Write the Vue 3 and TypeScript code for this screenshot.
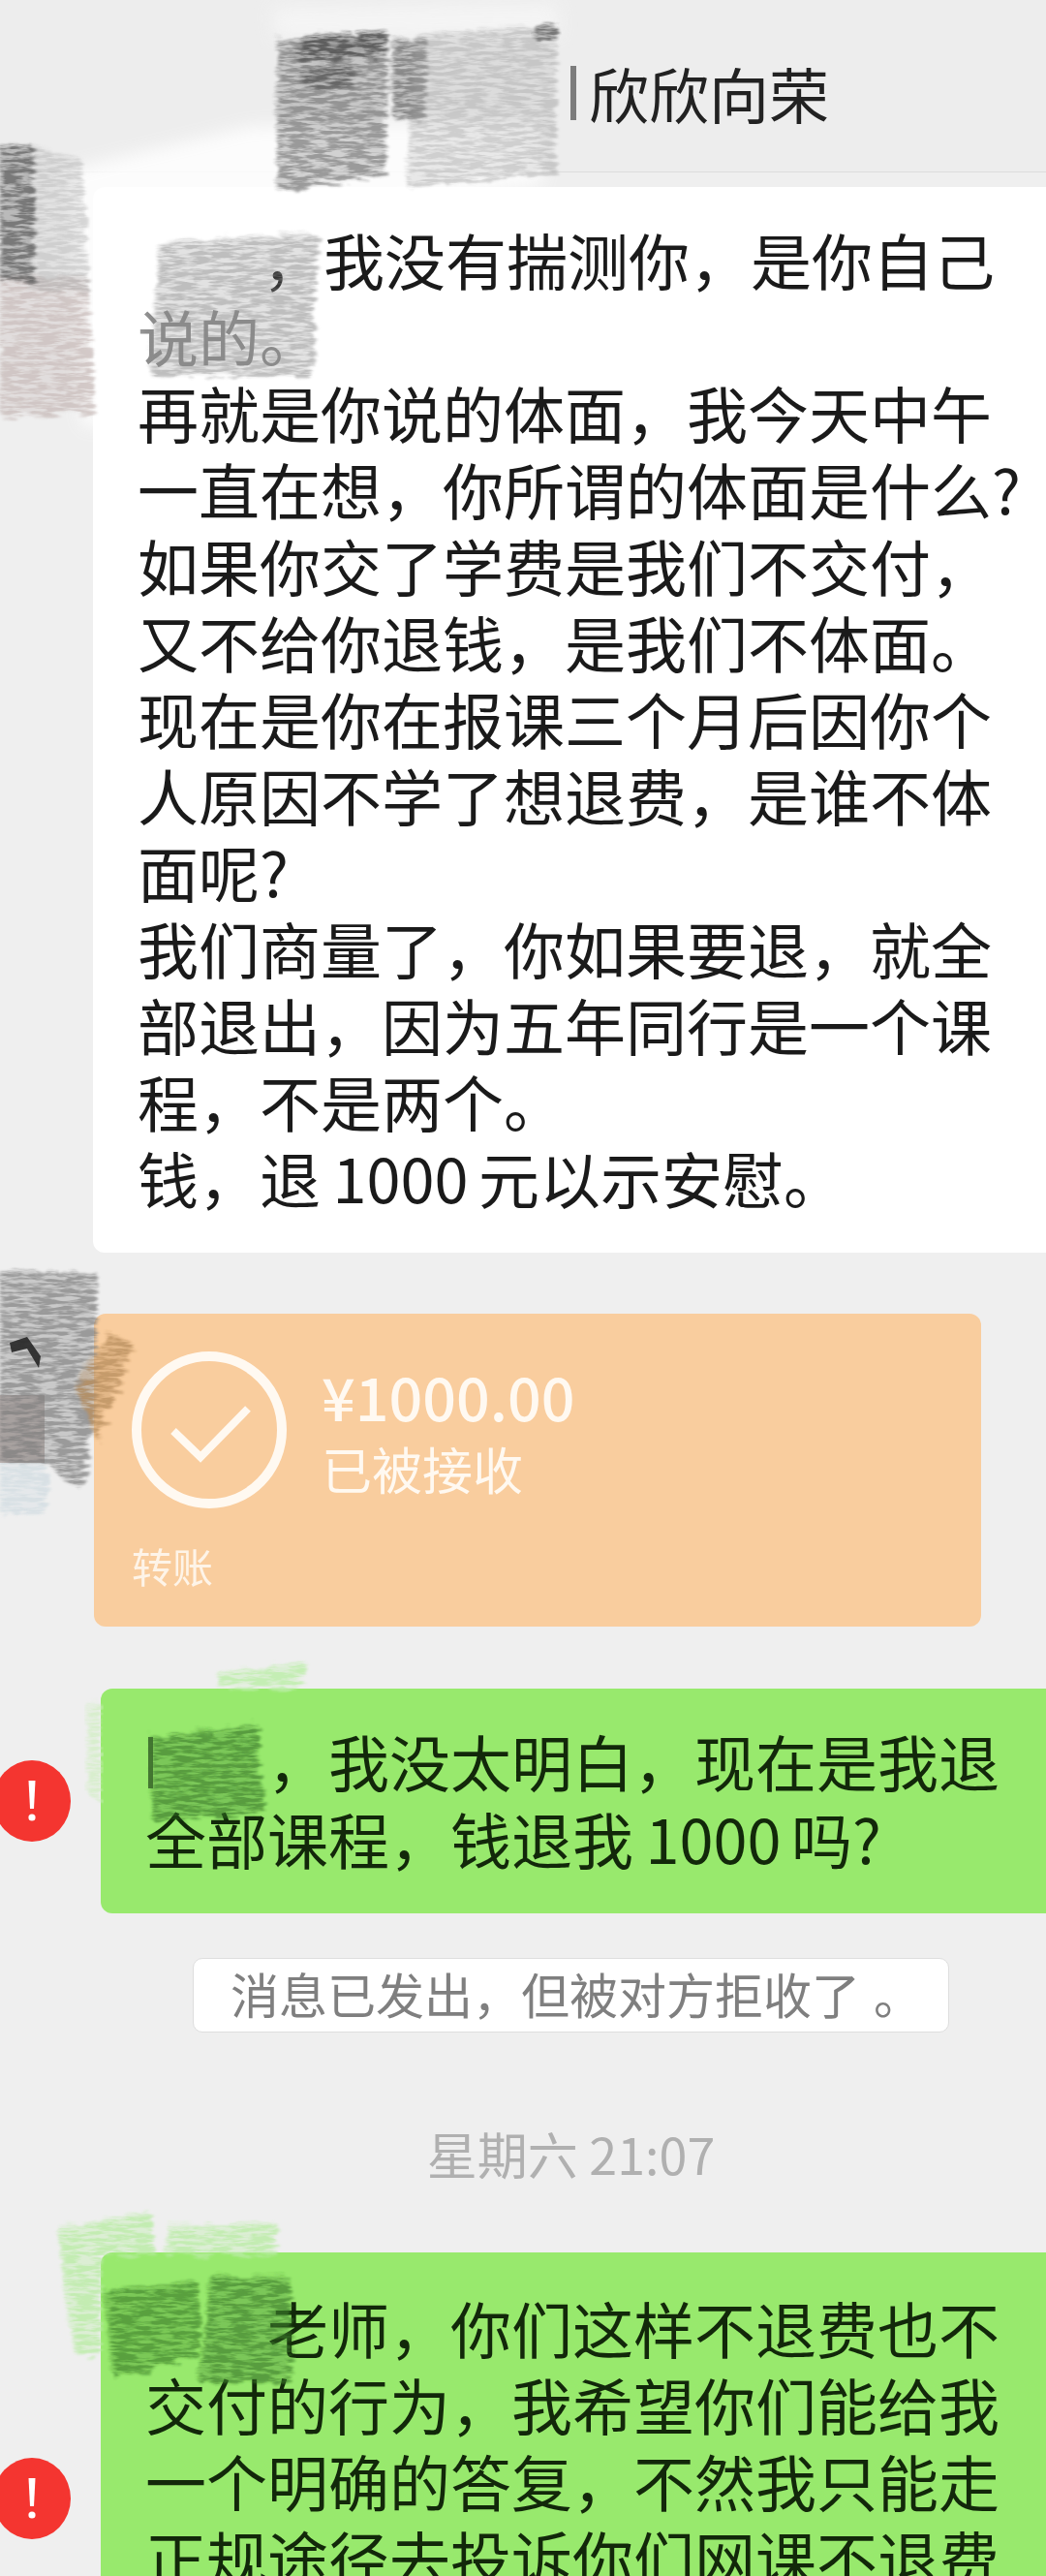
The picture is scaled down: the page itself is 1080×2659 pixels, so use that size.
<template>
  <div class="page">
    <header class="chat-header">
      <span class="name-bar"></span>
      <span class="chat-title">欣欣向荣</span>
    </header>

    <div class="bubble-white">
      <div v-for="(line, i) in whiteLines" :key="i" :class="['line', { indent: i === 0, faded: i === 1 }]">{{ line }}</div>
    </div>

    <div class="transfer">
      <div class="transfer-main">
        <svg class="transfer-icon" width="160" height="162" viewBox="0 0 160 162">
          <ellipse cx="80" cy="81" rx="75" ry="76" fill="none" stroke="#fff9f1" stroke-width="10" />
          <path d="M43 82 L71 109 L120 59" fill="none" stroke="#fff9f1" stroke-width="8" />
        </svg>
        <div class="transfer-text">
          <div class="amount">¥1000.00</div>
          <div class="status">已被接收</div>
        </div>
      </div>
      <div class="transfer-label">转账</div>
    </div>

    <div class="msg-row first">
      <svg class="error-badge" width="80" height="84" viewBox="0 0 80 84">
        <ellipse cx="40" cy="42" rx="40" ry="42" fill="#f43530" />
        <path d="M36.5 21 H43.5 L42 50 H38 Z" fill="#fff" />
        <circle cx="40" cy="59" r="3.6" fill="#fff" />
      </svg>
      <div class="bubble-green">
        <div v-for="(line, i) in greenFirst" :key="i" :class="['line', { indent: i === 0 }]">{{ line }}</div>
      </div>
    </div>

    <div class="system-note">消息已发出，但被对方拒收了<span class="stop">。</span></div>
    <div class="time-label">星期六 21:07</div>

    <div class="msg-row second">
      <svg class="error-badge lower" width="80" height="84" viewBox="0 0 80 84">
        <ellipse cx="40" cy="42" rx="40" ry="42" fill="#f43530" />
        <path d="M36.5 21 H43.5 L42 50 H38 Z" fill="#fff" />
        <circle cx="40" cy="59" r="3.6" fill="#fff" />
      </svg>
      <div class="bubble-green tight">
        <div v-for="(line, i) in greenSecond" :key="i" :class="['line', { indent: i === 0 }]">{{ line }}</div>
      </div>
    </div>

    <!-- 打码涂抹层，盖在内容上面 -->
    <svg class="scribbles" width="1080" height="2659" viewBox="0 0 1080 2659">
      <defs>
        <filter id="crayon" x="-15%" y="-15%" width="130%" height="130%">
          <feTurbulence type="fractalNoise" baseFrequency="0.05 0.28" numOctaves="3" seed="7" result="noise" />
          <feDisplacementMap in="SourceGraphic" in2="noise" scale="16" result="rough" />
          <feGaussianBlur in="rough" stdDeviation="1.5" result="soft" />
          <feColorMatrix in="noise" type="matrix" values="0 0 0 0 0  0 0 0 0 0  0 0 0 0 0  0 0 0 -4 2.6" result="grain" />
          <feComposite in="soft" in2="grain" operator="in" result="streaks" />
          <feComponentTransfer in="soft" result="wash">
            <feFuncA type="linear" slope="0.45" />
          </feComponentTransfer>
          <feMerge result="merged">
            <feMergeNode in="wash" />
            <feMergeNode in="streaks" />
          </feMerge>
          <feGaussianBlur in="merged" stdDeviation="0.7" />
        </filter>
        <filter id="smear" x="-30%" y="-30%" width="160%" height="160%">
          <feGaussianBlur stdDeviation="9" />
        </filter>
      </defs>
      <polygon
        v-for="(s, i) in scribbles"
        :key="i"
        :points="s.points"
        :fill="s.color"
        :opacity="s.opacity"
        :filter="s.soft ? 'url(#smear)' : s.flat ? undefined : 'url(#crayon)'"
      />
    </svg>
  </div>
</template>

<script setup lang="ts">
interface Scribble {
  points: string
  color: string
  opacity: number
  soft?: boolean
  flat?: boolean
}

const whiteLines = [
  '，我没有揣测你，是你自己',
  '说的。',
  '再就是你说的体面，我今天中午',
  '一直在想，你所谓的体面是什么?',
  '如果你交了学费是我们不交付，',
  '又不给你退钱，是我们不体面。',
  '现在是你在报课三个月后因你个',
  '人原因不学了想退费，是谁不体',
  '面呢?',
  '我们商量了，你如果要退，就全',
  '部退出，因为五年同行是一个课',
  '程，不是两个。',
  '钱，退\u20091000\u2006元以示安慰。',
]

const greenFirst = ['，我没太明白，现在是我退', '全部课程，钱退我\u20091000\u2006吗?']

const greenSecond = [
  '老师，你们这样不退费也不',
  '交付的行为，我希望你们能给我',
  '一个明确的答复，不然我只能走',
  '正规途径去投诉你们网课不退费',
]

const scribbles: Scribble[] = [
  // 顶部和左侧的白色抹痕
  { points: '70,175 260,130 560,125 560,190 300,225 145,245 125,440 85,440', color: '#ffffff', opacity: 0.85, soft: true },
  { points: '280,8 575,5 578,35 285,40', color: '#f7f7f7', opacity: 0.8, soft: true },
  // 标题左边的打码
  { points: '287,42 400,32 398,180 286,197', color: '#5a5a5a', opacity: 0.6 },
  { points: '315,36 400,34 396,56 305,62', color: '#333333', opacity: 0.55 },
  { points: '312,72 365,68 362,88 310,90', color: '#333333', opacity: 0.45 },
  { points: '405,42 440,40 438,122 405,122', color: '#4a4a4a', opacity: 0.6 },
  { points: '428,36 575,26 573,178 420,194', color: '#999999', opacity: 0.45 },
  { points: '552,26 576,24 576,40 552,40', color: '#555555', opacity: 0.7 },
  // 头像一
  { points: '0,285 90,285 98,425 0,430', color: '#c6b9b7', opacity: 0.75 },
  { points: '30,150 85,165 92,300 30,300', color: '#b0b0b0', opacity: 0.5 },
  { points: '0,150 34,150 36,290 0,290', color: '#5c5c5c', opacity: 0.8 },
  // 白气泡第一行
  { points: '165,250 328,242 322,388 155,388', color: '#8a8a8a', opacity: 0.55 },
  // 头像二
  { points: '0,1505 48,1505 48,1562 0,1562', color: '#d4dee3', opacity: 0.85 },
  { points: '0,1440 46,1440 46,1510 0,1510', color: '#b4a9a7', opacity: 0.85, flat: true },
  { points: '0,1312 100,1314 98,1450 85,1537 68,1530 50,1510 0,1510', color: '#777777', opacity: 0.7 },
  { points: '113,1377 138,1387 100,1487 78,1432', color: '#b98f5e', opacity: 0.8 },
  { points: '10,1386 28,1380 42,1400 40,1412 28,1392 12,1396', color: '#262626', opacity: 0.9, flat: true },
  // 绿气泡一
  { points: '225,1727 316,1716 312,1743 226,1743', color: '#bdeeaa', opacity: 0.85 },
  { points: '90,1760 104,1758 104,1860 90,1850', color: '#cfeec0', opacity: 0.7 },
  { points: '156,1794 266,1780 272,1872 158,1880', color: '#2e6a22', opacity: 0.6 },
  { points: '153,1793 158,1793 158,1846 153,1846', color: '#3c6b2c', opacity: 0.9, flat: true },
  // 绿气泡二
  { points: '60,2302 155,2283 160,2328 285,2328 285,2295 175,2298 170,2328 104,2328 104,2430 78,2430 65,2350', color: '#b9eca4', opacity: 0.8 },
  { points: '108,2364 205,2355 205,2432 118,2455', color: '#377a28', opacity: 0.65 },
  { points: '218,2350 300,2352 300,2458 205,2460', color: '#3a7a2c', opacity: 0.68 },
]
</script>

<style>
html,
body {
  margin: 0;
  background: #efefef;
}
</style>

<style scoped>
.page {
  position: relative;
  width: 1080px;
  height: 2659px;
  overflow: hidden;
  background: #efefef;
  color: #1a1a1a;
  font-family: "Noto Sans CJK SC", "Noto Sans", sans-serif;
  filter: blur(0.5px);
}

.chat-header {
  display: flex;
  align-items: center;
  box-sizing: border-box;
  height: 178px;
  padding: 15px 0 0 589px;
  background: #ededed;
  border-bottom: 1px solid #dcdcdc;
}

.name-bar {
  width: 6px;
  height: 56px;
  margin-right: 13px;
  background: #7c7c7c;
}

.chat-title {
  font-size: 62px;
  line-height: 70px;
  color: #222;
}

.line {
  white-space: nowrap;
}

.line.indent {
  text-indent: 126px;
}

.line.faded {
  color: #8c8c8c;
}

.bubble-white {
  margin: 15px 0 0 96px;
  padding: 34px 0 39px 46px;
  background: #fff;
  border-radius: 12px 0 0 12px;
  font-size: 63px;
  line-height: 79px;
}

.bubble-white .line.indent {
  text-indent: 129px;
}

.transfer {
  box-sizing: border-box;
  width: 916px;
  height: 323px;
  margin: 63px 0 0 97px;
  padding: 39px;
  background: #f9cd9e;
  border-radius: 12px;
  color: #fff9f1;
}

.transfer-main {
  display: flex;
}

.transfer-text {
  margin: 8px 0 0 36px;
}

.amount {
  font-size: 61px;
  font-weight: 500;
  line-height: 75px;
}

.status {
  font-size: 52px;
  line-height: 75px;
}

.transfer-label {
  margin-top: 34px;
  font-size: 42px;
  line-height: 50px;
  opacity: 0.9;
}

.msg-row {
  display: flex;
  gap: 31px;
  margin-left: -7px;
}

.msg-row.first {
  align-items: center;
  margin-top: 64px;
}

.msg-row.second {
  margin-top: 72px;
}

.error-badge {
  flex: none;
}

.error-badge.lower {
  margin-top: 212px;
}

.bubble-green {
  flex: 1;
  padding: 34px 0 38px 46px;
  background: #98e96d;
  border-radius: 12px 0 0 12px;
  color: #12280a;
  font-size: 63px;
  line-height: 80px;
}

.bubble-green.tight {
  padding-top: 37px;
  line-height: 79px;
}

.system-note {
  box-sizing: border-box;
  width: 781px;
  height: 77px;
  margin: 46px 0 0 199px;
  padding-left: 38px;
  background: #fff;
  border: 1px solid #dedede;
  border-radius: 10px;
  color: #7f7f7f;
  font-size: 50px;
  line-height: 71px;
  white-space: nowrap;
}

.stop {
  margin-left: 14px;
}

.time-label {
  margin-top: 95px;
  padding-left: 99px;
  color: #b0b0b0;
  font-size: 52px;
  line-height: 60px;
  text-align: center;
}

.scribbles {
  position: absolute;
  top: 0;
  left: 0;
  pointer-events: none;
}
</style>
